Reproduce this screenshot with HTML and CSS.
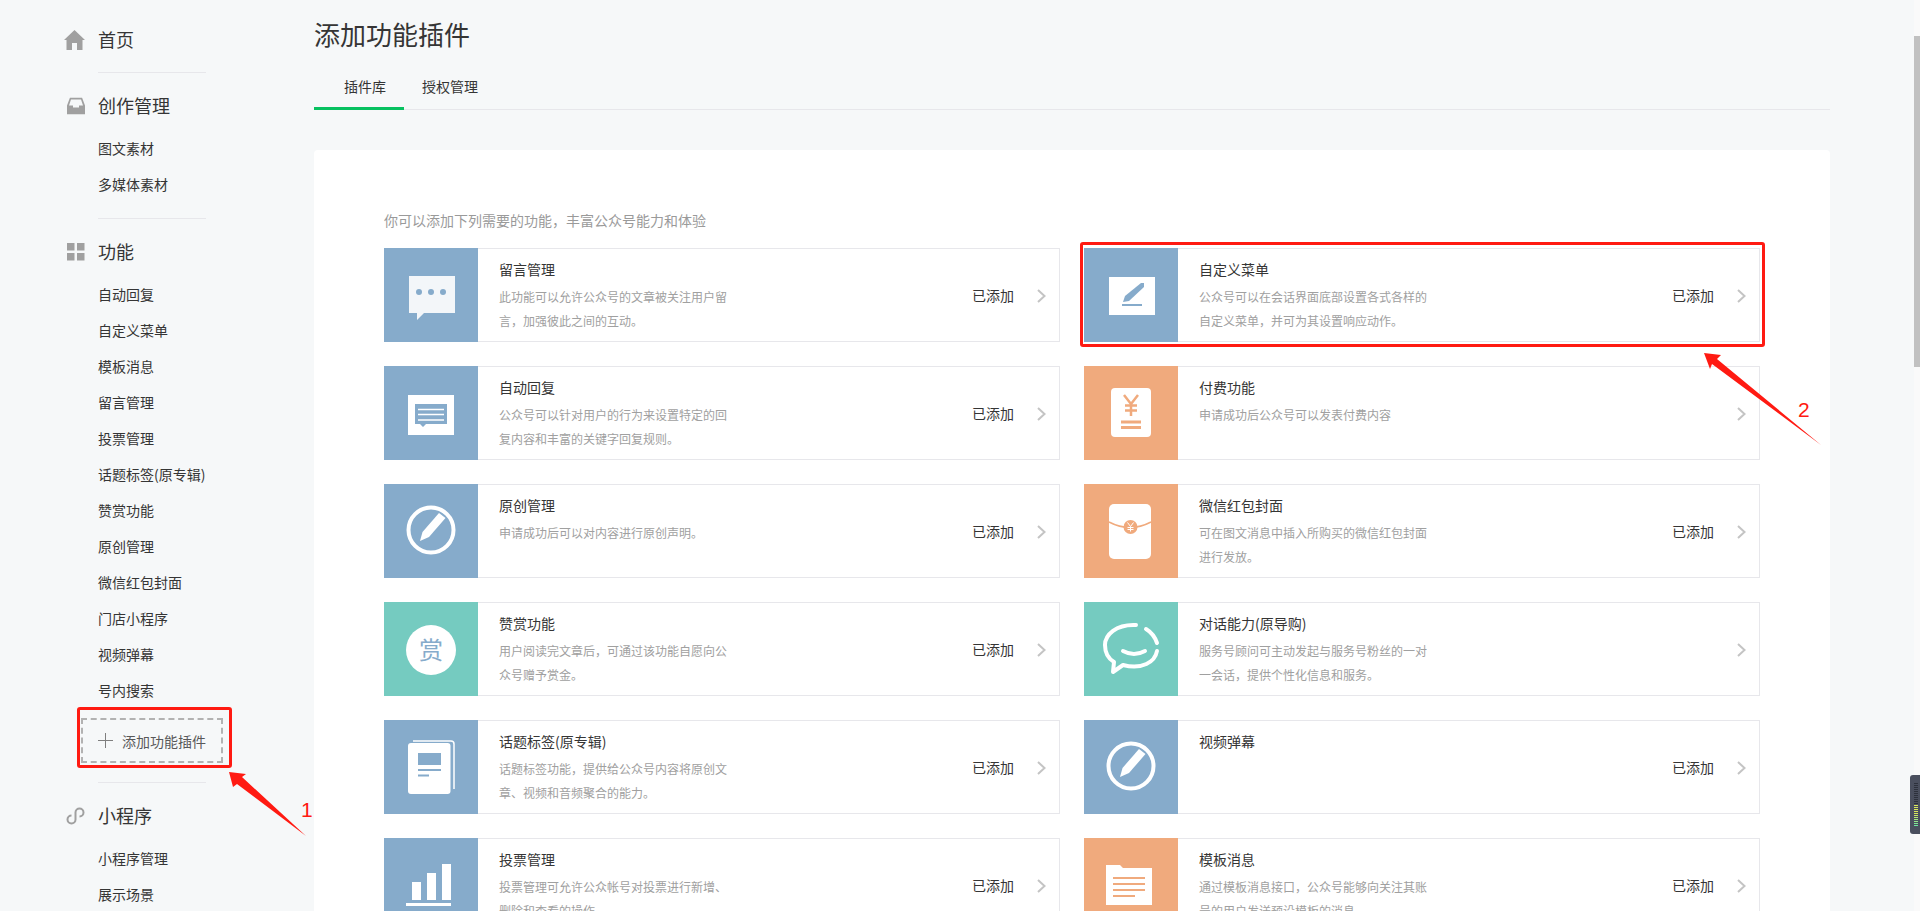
FILE: index.html
```html
<!DOCTYPE html>
<html lang="zh-CN">
<head>
    <meta charset="UTF-8">
    <title>添加功能插件</title>
    <link rel="stylesheet" href="styles.css">
</head>
<body>
    <div class="page">
        <div class="sidebar">
            <div class="nav-section nav-home">
                <div class="nav-head">
                    <svg class="nav-icon" width="21" height="20" viewBox="0 0 21 20"><path d="M10.5 0L21 10h-2.500v10H13v-7H8v7H2.500V10H0z"/></svg>
                    首页
                </div>
            </div>
            <div class="nav-section">
                <div class="nav-head">
                    <svg class="nav-icon" width="18" height="17" viewBox="0 0 18 17"><path fill-rule="evenodd" d="M3 0h12l3 8v9H0V8zM4 2L2 8h4v2h6V8h4l-2-6z"/></svg>
                    创作管理
                </div>
                <div class="nav-list">
                    <div class="nav-item">图文素材</div>
                    <div class="nav-item">多媒体素材</div>
                </div>
            </div>
            <div class="nav-section nav-func">
                <div class="nav-head">
                    <svg class="nav-icon" width="18" height="18" viewBox="0 0 18 18"><path d="M0 0h7.500v7.500H0zM10 0h7.500v7.500H10zM0 10h7.500v7.500H0zM10 10h7.500v7.500H10z"/></svg>
                    功能
                </div>
                <div class="nav-list">
                    <div class="nav-item">自动回复</div>
                    <div class="nav-item">自定义菜单</div>
                    <div class="nav-item">模板消息</div>
                    <div class="nav-item">留言管理</div>
                    <div class="nav-item">投票管理</div>
                    <div class="nav-item">话题标签(原专辑)</div>
                    <div class="nav-item">赞赏功能</div>
                    <div class="nav-item">原创管理</div>
                    <div class="nav-item">微信红包封面</div>
                    <div class="nav-item">门店小程序</div>
                    <div class="nav-item">视频弹幕</div>
                    <div class="nav-item">号内搜索</div>
                </div>
                <div class="add-plugin">
                    <svg width="15" height="15" viewBox="0 0 15 15"><path d="M7.500 0v15M0 7.500h15" stroke="#7f7f7f" stroke-width="1" fill="none"/></svg>
                    <span>添加功能插件</span>
                </div>
            </div>
            <div class="nav-section">
                <div class="nav-head">
                    <svg class="nav-icon nav-icon-line" width="19" height="18" viewBox="0 0 19 18"><path d="M5.500 8.500a4 4 0 1 0 4 4v-7a4 4 0 1 1 4 4"/></svg>
                    小程序
                </div>
                <div class="nav-list">
                    <div class="nav-item">小程序管理</div>
                    <div class="nav-item">展示场景</div>
                </div>
            </div>
        </div>

        <div class="main">
            <h1 class="page-title">添加功能插件</h1>
            <div class="tabs">
                <div class="tab tab-active">插件库</div>
                <div class="tab">授权管理</div>
            </div>
            <div class="panel">
                <p class="intro">你可以添加下列需要的功能，丰富公众号能力和体验</p>
                <div class="plugin-grid">

                    <div class="card">
                        <div class="tile tile-blue">
                            <svg width="94" height="94" viewBox="0 0 94 94"><path d="M25 28h46v37H40l-7 7v-7h-8z" fill="#f3f6f9"/><circle cx="35" cy="44" r="3" fill="#86abcb"/><circle cx="47" cy="44" r="3" fill="#86abcb"/><circle cx="59" cy="44" r="3" fill="#86abcb"/></svg>
                        </div>
                        <div class="card-body">
                            <div class="card-title">留言管理</div>
                            <p class="card-desc">此功能可以允许公众号的文章被关注用户留言，加强彼此之间的互动。</p>
                        </div>
                        <div class="card-side">
                            <span class="status">已添加</span>
                            <svg class="chevron" width="9" height="14" viewBox="0 0 9 14"><path d="M1 1l6.500 6L1 13"/></svg>
                        </div>
                    </div>

                    <div class="card">
                        <div class="tile tile-blue">
                            <svg width="94" height="94" viewBox="0 0 94 94"><path d="M25 29h46v38H25z" fill="#fff"/><path d="M39 54l2-6 16-13h3v4L45 53z" fill="#86abcb"/><path d="M38 57h20" stroke="#86abcb" stroke-width="2"/></svg>
                        </div>
                        <div class="card-body">
                            <div class="card-title">自定义菜单</div>
                            <p class="card-desc">公众号可以在会话界面底部设置各式各样的自定义菜单，并可为其设置响应动作。</p>
                        </div>
                        <div class="card-side">
                            <span class="status">已添加</span>
                            <svg class="chevron" width="9" height="14" viewBox="0 0 9 14"><path d="M1 1l6.500 6L1 13"/></svg>
                        </div>
                    </div>

                    <div class="card">
                        <div class="tile tile-blue">
                            <svg width="94" height="94" viewBox="0 0 94 94"><path d="M24 29h46v40H24z" fill="#fff"/><path d="M31 38h32v20H42l-3 3-3-3h-5z" fill="#86abcb"/><path d="M34 43.500h26M34 48.500h26M34 54h26" stroke="#fff" stroke-width="1.500"/></svg>
                        </div>
                        <div class="card-body">
                            <div class="card-title">自动回复</div>
                            <p class="card-desc">公众号可以针对用户的行为来设置特定的回复内容和丰富的关键字回复规则。</p>
                        </div>
                        <div class="card-side">
                            <span class="status">已添加</span>
                            <svg class="chevron" width="9" height="14" viewBox="0 0 9 14"><path d="M1 1l6.500 6L1 13"/></svg>
                        </div>
                    </div>

                    <div class="card">
                        <div class="tile tile-orange">
                            <svg width="94" height="94" viewBox="0 0 94 94"><rect x="27" y="22" width="40" height="49" rx="4" fill="#fff"/><path d="M40 29l7 9 7-9M47 38v12M41 39.500h12M41 44.500h12" stroke="#f0aa7d" stroke-width="2.500" fill="none"/><path d="M37 56h20M37 61.500h20" stroke="#f0aa7d" stroke-width="3"/></svg>
                        </div>
                        <div class="card-body">
                            <div class="card-title">付费功能</div>
                            <p class="card-desc">申请成功后公众号可以发表付费内容</p>
                        </div>
                        <div class="card-side">
                            <svg class="chevron" width="9" height="14" viewBox="0 0 9 14"><path d="M1 1l6.500 6L1 13"/></svg>
                        </div>
                    </div>

                    <div class="card">
                        <div class="tile tile-blue">
                            <svg width="94" height="94" viewBox="0 0 94 94"><circle cx="47" cy="46" r="22.500" fill="none" stroke="#fff" stroke-width="4"/><path d="M36 57l2.500-9L55 29l6.500 5L45 53z" fill="#fff"/></svg>
                        </div>
                        <div class="card-body">
                            <div class="card-title">原创管理</div>
                            <p class="card-desc">申请成功后可以对内容进行原创声明。</p>
                        </div>
                        <div class="card-side">
                            <span class="status">已添加</span>
                            <svg class="chevron" width="9" height="14" viewBox="0 0 9 14"><path d="M1 1l6.500 6L1 13"/></svg>
                        </div>
                    </div>

                    <div class="card">
                        <div class="tile tile-orange">
                            <svg width="94" height="94" viewBox="0 0 94 94"><rect x="25" y="20" width="42" height="55" rx="5" fill="#fff"/><path d="M25 38q21 11 42 0" stroke="#f0aa7d" stroke-width="1.500" fill="none"/><circle cx="46.500" cy="43" r="7" fill="#f0aa7d"/><path d="M43.500 38.500l3 4 3-4M46.500 42.500v5M43.500 43.500h6M43.500 45.500h6" stroke="#fff" stroke-width="1" fill="none"/></svg>
                        </div>
                        <div class="card-body">
                            <div class="card-title">微信红包封面</div>
                            <p class="card-desc">可在图文消息中插入所购买的微信红包封面进行发放。</p>
                        </div>
                        <div class="card-side">
                            <span class="status">已添加</span>
                            <svg class="chevron" width="9" height="14" viewBox="0 0 9 14"><path d="M1 1l6.500 6L1 13"/></svg>
                        </div>
                    </div>

                    <div class="card">
                        <div class="tile tile-teal">
                            <svg width="94" height="94" viewBox="0 0 94 94"><circle cx="47" cy="48" r="25" fill="#fff"/><text class="tile-char" x="47" y="57" text-anchor="middle">赏</text></svg>
                        </div>
                        <div class="card-body">
                            <div class="card-title">赞赏功能</div>
                            <p class="card-desc">用户阅读完文章后，可通过该功能自愿向公众号赠予赏金。</p>
                        </div>
                        <div class="card-side">
                            <span class="status">已添加</span>
                            <svg class="chevron" width="9" height="14" viewBox="0 0 9 14"><path d="M1 1l6.500 6L1 13"/></svg>
                        </div>
                    </div>

                    <div class="card">
                        <div class="tile tile-teal">
                            <svg width="94" height="94" viewBox="0 0 94 94"><path d="M52 23C32 22 21 33 21 43c0 8 4 14 9 17l-1 10 10-7c19 5 32-3 34-14M62 27c5 3 9 8 11 14M39 49q11 6 22 0" fill="none" stroke="#fff" stroke-width="4" stroke-linecap="round" stroke-linejoin="round"/></svg>
                        </div>
                        <div class="card-body">
                            <div class="card-title">对话能力(原导购)</div>
                            <p class="card-desc">服务号顾问可主动发起与服务号粉丝的一对一会话，提供个性化信息和服务。</p>
                        </div>
                        <div class="card-side">
                            <svg class="chevron" width="9" height="14" viewBox="0 0 9 14"><path d="M1 1l6.500 6L1 13"/></svg>
                        </div>
                    </div>

                    <div class="card">
                        <div class="tile tile-blue">
                            <svg width="94" height="94" viewBox="0 0 94 94"><path d="M29 21h38a3 3 0 0 1 3 3v45" fill="none" stroke="#fff" stroke-width="1.500"/><rect x="24" y="23" width="42.500" height="51" rx="3" fill="#fff"/><path d="M34 33h23v12H34z" fill="#86abcb"/><path d="M34 50h23M34 55.500h11" stroke="#86abcb" stroke-width="2"/></svg>
                        </div>
                        <div class="card-body">
                            <div class="card-title">话题标签(原专辑)</div>
                            <p class="card-desc">话题标签功能，提供给公众号内容将原创文章、视频和音频聚合的能力。</p>
                        </div>
                        <div class="card-side">
                            <span class="status">已添加</span>
                            <svg class="chevron" width="9" height="14" viewBox="0 0 9 14"><path d="M1 1l6.500 6L1 13"/></svg>
                        </div>
                    </div>

                    <div class="card">
                        <div class="tile tile-blue">
                            <svg width="94" height="94" viewBox="0 0 94 94"><circle cx="47" cy="46" r="22.500" fill="none" stroke="#fff" stroke-width="4"/><path d="M36 57l2.500-9L55 29l6.500 5L45 53z" fill="#fff"/></svg>
                        </div>
                        <div class="card-body">
                            <div class="card-title">视频弹幕</div>
                            <p class="card-desc"></p>
                        </div>
                        <div class="card-side">
                            <span class="status">已添加</span>
                            <svg class="chevron" width="9" height="14" viewBox="0 0 9 14"><path d="M1 1l6.500 6L1 13"/></svg>
                        </div>
                    </div>

                    <div class="card">
                        <div class="tile tile-blue">
                            <svg width="94" height="94" viewBox="0 0 94 94"><path d="M28 44h9v18h-9zM43 35h9v27h-9zM58 26h9v36h-9zM22 65h45v3H22z" fill="#fff"/></svg>
                        </div>
                        <div class="card-body">
                            <div class="card-title">投票管理</div>
                            <p class="card-desc">投票管理可允许公众帐号对投票进行新增、删除和查看的操作</p>
                        </div>
                        <div class="card-side">
                            <span class="status">已添加</span>
                            <svg class="chevron" width="9" height="14" viewBox="0 0 9 14"><path d="M1 1l6.500 6L1 13"/></svg>
                        </div>
                    </div>

                    <div class="card">
                        <div class="tile tile-orange">
                            <svg width="94" height="94" viewBox="0 0 94 94"><path d="M22 27h14l3 3h29v37H22z" fill="#fff"/><path d="M29 40h32M29 46h32M29 52h32M29 58h22" stroke="#f0aa7d" stroke-width="2"/></svg>
                        </div>
                        <div class="card-body">
                            <div class="card-title">模板消息</div>
                            <p class="card-desc">通过模板消息接口，公众号能够向关注其账号的用户发送预设模板的消息</p>
                        </div>
                        <div class="card-side">
                            <span class="status">已添加</span>
                            <svg class="chevron" width="9" height="14" viewBox="0 0 9 14"><path d="M1 1l6.500 6L1 13"/></svg>
                        </div>
                    </div>

                </div>
            </div>
        </div>
    </div>

    <!-- red marks drawn over the screenshot -->
    <div class="mark mark-side"></div>
    <div class="mark mark-card"></div>
    <svg class="arrows" width="1920" height="911" viewBox="0 0 1920 911">
        <path d="M229 772l17 2-4 3 64 59-69-52-4 3z" fill="#ff1a12"/>
        <path d="M1704 353l17 2-4 4 104 86-109-81-2 5z" fill="#ff1a12"/>
    </svg>
    <span class="mark-num num-one">1</span>
    <span class="mark-num num-two">2</span>

    <div class="scroll-track"><div class="scroll-thumb"></div></div>
    <div class="float-widget"><div class="float-bars"></div></div>
</body>
</html>
```

FILE: styles.css
```css
html, body { margin: 0; height: 100%; overflow: hidden; }
body { background: #f6f8f9; color: #353535; font-family: "Noto Sans CJK SC", "Noto Sans", sans-serif; font-size: 14px; }
p { margin: 0; }

.page { display: flex; align-items: flex-start; }

/* sidebar */
.sidebar { width: 314px; flex: none; padding-top: 22px; box-sizing: border-box; }
.nav-section { margin-left: 98px; width: 108px; padding-bottom: 15px; margin-bottom: 15px; border-bottom: 1px solid #e7e7eb; }
.nav-section:last-child { border-bottom: none; }
.nav-home { padding-bottom: 14px; }
.nav-func { padding-bottom: 19px; }
.nav-head { position: relative; height: 36px; line-height: 34px; font-size: 18px; white-space: nowrap; }
.nav-icon { position: absolute; right: 100%; top: 50%; transform: translateY(-50%); margin-right: 13px; fill: #a0a0a0; }
.nav-icon-line { fill: none; stroke: #a0a0a0; stroke-width: 2; }
.nav-list { margin-top: 7px; }
.nav-item { height: 36px; line-height: 34px; white-space: nowrap; }
.add-plugin { display: flex; align-items: center; gap: 9px; box-sizing: border-box; width: 142px; height: 45px; margin: 9px 0 0 -17px; padding-left: 15px; border: 2px dashed #b2b2b2; color: #595959; }

/* main */
.main { width: 1516px; flex: none; }
.page-title { margin: 16px 0 12px; font-size: 26px; font-weight: 400; line-height: 36px; }
.tabs { display: flex; box-sizing: border-box; height: 46px; border-bottom: 1px solid #e7e7eb; }
.tab { box-sizing: border-box; height: 46px; padding: 0 18px; line-height: 44px; }
.tab-active { padding-left: 30px; box-shadow: inset 0 -3px 0 #07c160; }

.panel { margin-top: 40px; padding: 61px 70px 40px; background: #fff; border-radius: 4px; }
.intro { color: #9a9a9a; line-height: 18px; margin-bottom: 19px; }
.plugin-grid { display: grid; grid-template-columns: 1fr 1fr; gap: 24px; }

.card { display: flex; box-sizing: border-box; height: 94px; border: 1px solid #e7e7eb; }
.tile { flex: none; width: 94px; height: 94px; margin: -1px 0 -1px -1px; }
.tile svg { display: block; }
.tile-blue { background: #86abcb; }
.tile-orange { background: #f0aa7d; }
.tile-teal { background: #75cbc0; }
.tile-char { font-size: 24px; fill: #86abcb; }

.card-body { flex: 1; padding: 10px 0 0 21px; }
.card-title { line-height: 20px; }
.card-desc { width: 228px; margin-top: 6px; font-size: 12px; line-height: 24px; color: #a0a0a0; }
.card-side { display: flex; align-items: center; padding-right: 13px; }
.status { margin-right: 23px; }
.chevron { margin-top: 2px; fill: none; stroke: #c4c4c4; stroke-width: 2; }

/* marks on top of the page */
.mark { position: absolute; box-sizing: border-box; border: 3px solid #ff1a12; border-radius: 3px; }
.mark-side { left: 77px; top: 707px; width: 155px; height: 61px; }
.mark-card { left: 1080px; top: 242px; width: 685px; height: 105px; }
.arrows { position: absolute; left: 0; top: 0; pointer-events: none; }
.mark-num { position: absolute; font-family: "Liberation Sans", sans-serif; font-size: 21px; line-height: 21px; color: #ff1a12; }
.num-one { left: 301px; top: 799px; }
.num-two { left: 1798px; top: 399px; }

.scroll-track { position: absolute; top: 0; right: 0; width: 6px; height: 100%; background: #fafafa; }
.scroll-thumb { height: 331px; margin-top: 36px; background: #c1c1c1; }
.float-widget { position: absolute; right: 0; top: 775px; width: 10px; height: 59px; background: #4a4f5e; border-radius: 3px 0 0 3px; }
.float-bars { width: 4px; height: 45px; margin: 7px 0 0 4px; background: repeating-linear-gradient(to bottom, rgba(74,79,94,1) 0 1px, transparent 1px 2px), linear-gradient(to bottom, #2d313c 0 48%, #d8e85a 50% 70%, #62e6a8 100%); }
```
